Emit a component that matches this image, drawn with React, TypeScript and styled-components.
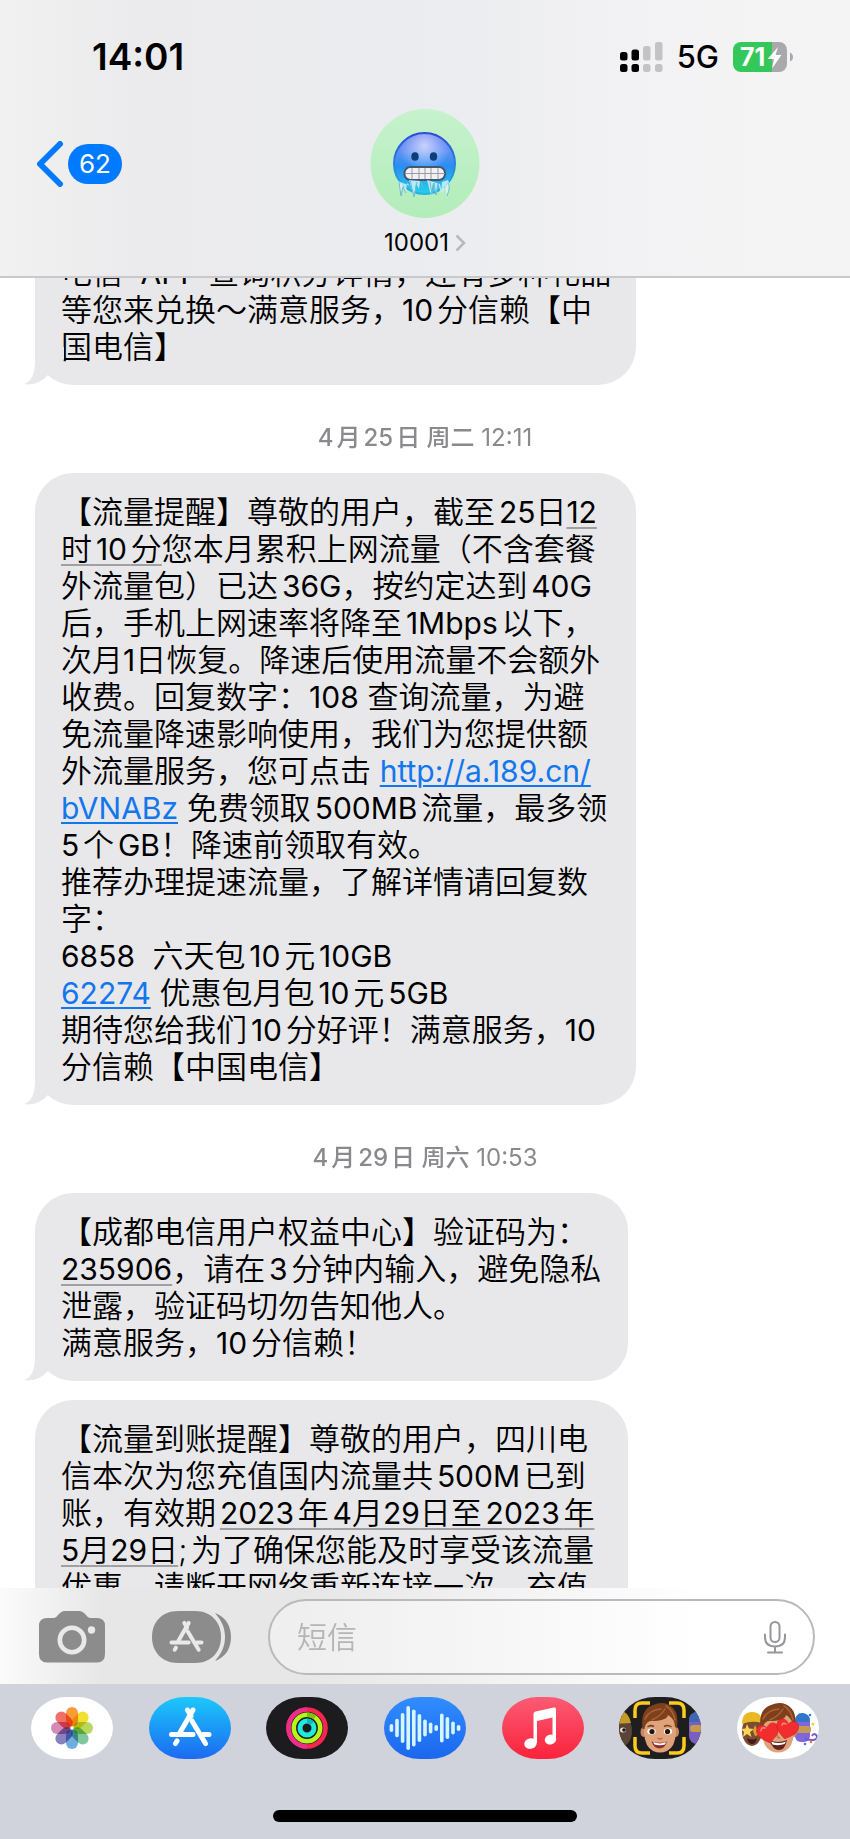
import React from 'react';
import styled, { createGlobalStyle } from 'styled-components';

const GlobalStyle = createGlobalStyle`
  *, *::before, *::after { box-sizing: border-box; }
  html, body { margin: 0; padding: 0; background: #fff; }
  body { font-family: Inter, 'Noto Sans CJK SC', sans-serif; color: #000; }
  button { border: 0; padding: 0; background: none; font: inherit; color: inherit; cursor: pointer; }
  svg { display: block; }
`;

const Screen = styled.div`
  display: flex;
  flex-direction: column;
  height: 100vh;
  overflow: hidden;
  background: #fff;
`;

/* ---------- header ---------- */

const Header = styled.header`
  flex: none;
  position: relative;
  z-index: 1;
  border-bottom: 2px solid #c9c9cb;
  background: linear-gradient(90deg, #f1f1f1 0%, #ebebed 16%, #ebecef 50%, #f2f2f4 74%, #f4f4f4 100%);
`;

const StatusBar = styled.div`
  display: flex;
  align-items: center;
  justify-content: space-between;
  height: 109px;
  padding: 4px 56px 0 92px;
`;

const Clock = styled.time`
  font-size: 37px;
  font-weight: 600;
  line-height: 44px;
`;

const StatusRight = styled.div`
  display: flex;
  align-items: center;
  gap: 14px;
`;

const Network = styled.span`
  font-size: 31px;
  font-weight: 500;
  line-height: 36px;
`;

const NavBar = styled.div`
  display: grid;
  grid-template-columns: 1fr auto 1fr;
  align-items: start;
  padding: 0 36px 17px;
`;

const BackButton = styled.button`
  justify-self: start;
  display: flex;
  align-items: center;
  gap: 4px;
  margin-top: 32px;
`;

const UnreadBadge = styled.span`
  width: 54px;
  border-radius: 20px;
  background: #007aff;
  color: #fff;
  font-size: 26px;
  line-height: 40px;
  text-align: center;
`;

const Contact = styled.button`
  display: flex;
  flex-direction: column;
  align-items: center;
  gap: 9px;
`;

const ContactName = styled.span`
  display: flex;
  align-items: center;
  gap: 6px;
  font-size: 24px;
  line-height: 32px;
`;

/* ---------- conversation ---------- */

const Thread = styled.main`
  flex: 1;
  min-height: 0;
  overflow: hidden;
  padding: 0 35px;
`;

const Scrolled = styled.div`
  display: flex;
  flex-direction: column;
  align-items: flex-start;
  margin-top: -44px;
`;

const Stamp = styled.div`
  align-self: stretch;
  padding: 37px 0 19px;
  color: #8a8a8e;
  font-size: 24px;
  line-height: 32px;
  text-align: center;
  text-autospace: normal;

  b { font-weight: 500; }
`;

const Bubble = styled.article<{ $next?: boolean; $narrow?: boolean }>`
  position: relative;
  width: ${(p) => (p.$narrow ? 76 : 77)}%;
  margin-top: ${(p) => (p.$next ? 19 : 0)}px;
  padding: 20px 26px;
  border-radius: 38px;
  background: #e8e8ea;
  font-size: 31px;
  font-weight: 350;
  line-height: 37px;
  text-autospace: normal;
`;

const TailShape = styled.svg`
  position: absolute;
  left: -11px;
  bottom: 0;
`;

const Line = styled.div`
  height: 37px;
  white-space: pre;
`;

const Latin = styled.span`
  font-size: 30px;
  font-weight: 400;
`;

const Tight = styled.span`
  text-autospace: no-autospace;
`;

const Detected = styled.span`
  text-decoration: underline 2px #a0a0a3;
  text-decoration-skip-ink: none;
  text-underline-offset: 4px;
`;

const Link = styled.a`
  color: #1277ee;
  text-decoration: underline 2px;
  text-underline-offset: 3px;
`;

/* ---------- composer ---------- */

const Composer = styled.form`
  flex: none;
  display: flex;
  align-items: center;
  gap: 36px;
  padding: 11px 35px 9px 39px;
  background: linear-gradient(90deg, #fbfbfb 0%, #e7e7e8 12%, #e7e7e8 36%, #f4f4f5 62%, #fff 82%);
`;

const IconButton = styled.button`
  flex: none;
`;

const AppsButton = styled(IconButton)`
  margin-left: 11px;
`;

const Field = styled.label`
  flex: 1;
  display: flex;
  align-items: center;
  height: 76px;
  padding: 0 27px;
  border: 2px solid #bababc;
  border-radius: 38px;
  background: rgba(255, 255, 255, 0.35);
`;

const Input = styled.input`
  flex: 1;
  min-width: 0;
  border: 0;
  outline: 0;
  padding: 0;
  background: none;
  font: 350 30px/40px Inter, 'Noto Sans CJK SC', sans-serif;

  &::placeholder { color: #b5b5b7; opacity: 1; }
`;

/* ---------- app drawer ---------- */

const Drawer = styled.footer`
  flex: none;
  display: flex;
  flex-direction: column;
  align-items: center;
  padding: 13px 31px 17px;
  background: #d0d3db;
`;

const AppRow = styled.nav`
  align-self: stretch;
  display: flex;
  justify-content: space-between;
`;

const AppButton = styled.button<{ $fill: string }>`
  width: 82px;
  height: 62px;
  border-radius: 36px / 31px;
  overflow: hidden;
  background: ${(p) => p.$fill};
`;

const HomeBar = styled.div`
  width: 304px;
  height: 12px;
  margin-top: 51px;
  border-radius: 6px;
  background: #000;
`;

/* ---------- drawings ---------- */

const Signal = () => (
  <svg width="43" height="30" viewBox="0 0 43 30" aria-hidden="true">
    <g fill="#000">
      <rect x="0" y="10" width="7.5" height="8.5" rx="2.5" />
      <rect x="0" y="22" width="7.5" height="8" rx="2.5" />
      <rect x="11.5" y="7.5" width="7.5" height="11" rx="2.5" />
      <rect x="11.5" y="22" width="7.5" height="8" rx="2.5" />
    </g>
    <g fill="#c3c3c5">
      <rect x="23" y="4" width="7.5" height="14.5" rx="2.5" />
      <rect x="23" y="22" width="7.5" height="8" rx="2.5" />
      <rect x="35" y="0" width="7.5" height="18.5" rx="2.5" />
      <rect x="35" y="22" width="7.5" height="8" rx="2.5" />
    </g>
  </svg>
);

const BatteryBox = styled.span`
  position: relative;
  display: flex;
  align-items: center;
  height: 30px;
`;

const BatteryLevel = styled.span`
  position: absolute;
  left: 7px;
  color: #fff;
  font-size: 25px;
  font-weight: 700;
  line-height: 30px;
`;

const Battery = () => (
  <BatteryBox>
    <svg width="61" height="30" viewBox="0 0 61 30" aria-hidden="true">
      <path d="M8 0H39V30H8A8 8 0 0 1 0 22V8A8 8 0 0 1 8 0Z" fill="#34c759" />
      <path d="M39 0H46A8 8 0 0 1 54 8V22A8 8 0 0 1 46 30H39Z" fill="#a9a9ab" />
      <path d="M57 10.5Q60 12 60 15T57 19.5Z" fill="#a9a9ab" />
      <path d="M45 5L34.500 17H41L39 26.500L48.500 13H42.500Z" fill="#fff" />
    </svg>
    <BatteryLevel>71</BatteryLevel>
  </BatteryBox>
);

const BackChevron = () => (
  <svg width="28" height="46" viewBox="0 0 28 46" aria-hidden="true">
    <path d="M24 3L4 23L24 43" fill="none" stroke="#007aff" strokeWidth="6" strokeLinecap="round" strokeLinejoin="round" />
  </svg>
);

const ColdFace = () => (
  <svg width="110" height="109" viewBox="0 0 110 109" role="img" aria-label="10001">
    <defs>
      <linearGradient id="avatarBg" x1="0" y1="0" x2="0" y2="1">
        <stop offset="0" stopColor="#c6f2cd" />
        <stop offset="1" stopColor="#b2edb9" />
      </linearGradient>
      <linearGradient id="coldSkin" x1="0" y1="0" x2="0" y2="1">
        <stop offset="0" stopColor="#5472ee" />
        <stop offset="0.3" stopColor="#5f90f5" />
        <stop offset="0.55" stopColor="#2a8ef0" />
        <stop offset="1" stopColor="#27d0ea" />
      </linearGradient>
      <radialGradient id="coldShine" cx="0.5" cy="0.2" r="0.45">
        <stop offset="0" stopColor="#e4e4ff" stopOpacity="0.8" />
        <stop offset="1" stopColor="#e4e4ff" stopOpacity="0" />
      </radialGradient>
      <linearGradient id="coldRim" x1="0" y1="0" x2="0" y2="1">
        <stop offset="0" stopColor="#2c4bdb" />
        <stop offset="1" stopColor="#22b6e2" />
      </linearGradient>
    </defs>
    <circle cx="55" cy="54.500" r="54.500" fill="url(#avatarBg)" />
    <circle cx="54.500" cy="54.500" r="30.500" fill="url(#coldSkin)" stroke="url(#coldRim)" strokeWidth="2" />
    <circle cx="54.500" cy="54" r="29" fill="url(#coldShine)" />
    <ellipse cx="45" cy="47.500" rx="3.700" ry="4.300" fill="#0a3f77" />
    <ellipse cx="63.500" cy="47.500" rx="3.700" ry="4.300" fill="#0a3f77" />
    <rect x="34.500" y="58" width="40.500" height="13" rx="6" fill="#f1f1f3" stroke="#43576e" strokeWidth="2" />
    <path d="M35 64.500H75M42 59V70M49 59V70M55 59V70M61 59V70M68 59V70" stroke="#9b9ba1" strokeWidth="1" />
    <path
      d="M28 72L31 87L33 76L36 84L37 74L40 77M39 71L44 88L46 74L49 80L50 72ZM57 71L61 86L63 74L66 87L68 74L71 84L72 73L78 71L80 76L77 88L75 77L72 84L70 75"
      fill="#d8f6fb"
      fillOpacity="0.8"
    />
    <path d="M29 73L31 87L33 78L36 84M40 71L44 88L47 73M51 73L53 78M60 73L62 85L64 74L66 86L68 74M78 74Q81 77 77 87" fill="none" stroke="#6db9d2" strokeWidth="1" />
  </svg>
);

const SmallChevron = () => (
  <svg width="11" height="18" viewBox="0 0 11 18" aria-hidden="true">
    <path d="M1.500 1.500L9 9L1.500 16.500" fill="none" stroke="#b9b9bc" strokeWidth="2.500" />
  </svg>
);

const Tail = () => (
  <TailShape width="40" height="38" viewBox="0 0 40 38" aria-hidden="true">
    <path d="M11 0V14C11 27 7 35 0 37Q14 39.500 25 27L40 12V0Z" fill="#e8e8ea" />
  </TailShape>
);

const Camera = () => (
  <svg width="66" height="52" viewBox="0 0 66 52" aria-hidden="true">
    <path
      d="M8 7H15Q17 7 19 4L21 2Q23 0 26 0H40Q43 0 45 2L47 4Q49 7 51 7H58Q66 7 66 15V43Q66 51.500 58 51.500H8Q0 51.500 0 43V15Q0 7 8 7Z"
      fill="#8c8c8d"
    />
    <circle cx="33" cy="29" r="12.200" fill="none" stroke="#e9e9ea" strokeWidth="4.600" />
    <circle cx="52.500" cy="19" r="3.700" fill="#e9e9ea" />
  </svg>
);

const StoreMark = ({ color }: { color: string }) => (
  <g fill="none" stroke={color} strokeWidth="5" strokeLinecap="round">
    <path d="M44 13L31 35.500" />
    <path d="M38.500 13L42 19M43 24L56.500 46.500" />
    <path d="M22.500 37.500H44M54 37.500H60" />
    <path d="M28 44L26.500 46.500" />
  </g>
);

const Apps = () => (
  <svg width="80" height="52" viewBox="0 0 80 52" aria-hidden="true">
    <path d="M63 2C74 6 79 15 79 26S74 46 63 50C69 43 73 36 73 26S69 9 63 2Z" fill="#8c8c8d" />
    <path d="M26 0H43C59 0 69 11 69 26S59 52 43 52H26C10 52 0 41 0 26S10 0 26 0Z" fill="#8c8c8d" />
    <g transform="translate(1.500 1.500) scale(0.800)">
      <StoreMark color="#e9e9ea" />
    </g>
  </svg>
);

const Mic = () => (
  <svg width="22" height="33" viewBox="0 0 22 33" fill="none" stroke="#97979a" strokeWidth="2" strokeLinecap="round" aria-hidden="true">
    <rect x="6.500" y="1" width="9" height="20" rx="4.500" />
    <path d="M1 13.500V16Q1 25.500 11 25.500T21 16V13.500M11 25.500V31.500M4 31.500H18" />
  </svg>
);

const AppSvg = ({ children }: { children: React.ReactNode }) => (
  <svg width="82" height="62" viewBox="0 0 82 62" aria-hidden="true">{children}</svg>
);

const petals = ['#f79427', '#f0dc20', '#b3d553', '#74c095', '#63a6de', '#7f75b8', '#d07fb0', '#f0635a'];
const PetalShape = styled.rect`
  mix-blend-mode: multiply;
`;

const Photos = () => (
  <AppSvg>
    {petals.map((c, i) => (
      <PetalShape key={c} x="35" y="10" width="12" height="19.500" rx="6" fill={c} fillOpacity="0.920" transform={`rotate(${i * 45} 41 31)`} />
    ))}
  </AppSvg>
);

const Activity = () => (
  <AppSvg>
    <g fill="none" strokeWidth="4.600">
      <circle cx="41" cy="31" r="18.500" stroke="#fa2450" />
      <path d="M41 12.500A18.500 18.500 0 0 0 41 49.500" stroke="#ee2c8c" />
      <circle cx="41" cy="31" r="13.200" stroke="#b6f41c" />
      <path d="M41 17.800A13.200 13.200 0 0 1 49 20.500" stroke="#7cc40b" />
      <circle cx="41" cy="31" r="7" stroke="#1feadb" strokeWidth="5" />
      <path d="M41 24A7 7 0 0 1 46 26.500" stroke="#11b8c0" strokeWidth="5" />
    </g>
  </AppSvg>
);

const waveHeights = [8, 18.5, 30, 44, 37, 28, 17, 11, 6, 29, 22, 13, 6];
const Wave = () => (
  <AppSvg>
    {waveHeights.map((h, i) => (
      <rect key={i} x={5.6 + i * 5.6} y={31 - h / 2} width="3.600" height={h} rx="1.800" fill="#d5f6ff" />
    ))}
  </AppSvg>
);

const Music = () => (
  <AppSvg>
    <path d="M31.500 17Q31.500 15 33.500 14.500L52 10.600Q54 10.200 54 12.500V42H50.500V20.500L35 24V46H31.500Z" fill="#fff" />
    <ellipse cx="28.500" cy="46.500" rx="6.300" ry="5.200" fill="#fff" transform="rotate(-15 28.500 46.500)" />
    <ellipse cx="48.500" cy="42.500" rx="5.800" ry="5" fill="#fff" transform="rotate(-15 48.500 42.500)" />
  </AppSvg>
);

const Head = () => (
  <g>
    <ellipse cx="24.500" cy="35" rx="3" ry="5" fill="#c98863" />
    <ellipse cx="57" cy="35" rx="3" ry="5" fill="#c98863" />
    <path d="M25 24Q25 13 41 13T57 24V36Q56 50 48 54Q41 57 34 54Q26 50 25 36Z" fill="#e0a27a" />
    <path d="M23.500 32Q21 12 34 8Q46 3 54 11Q60 17 58 31L56 30Q56 22 49 18Q48 24 31 24Q26 26 25.500 32Z" fill="#7d3f1c" />
    <path d="M26 22Q30 13 42 12M33 23Q42 19 46 12M47 9Q54 13 56 23" fill="none" stroke="#a86434" strokeWidth="1.500" strokeLinecap="round" />
  </g>
);

const MemojiCamera = () => (
  <AppSvg>
    <ellipse cx="2" cy="34" rx="11" ry="16" fill="#5b4336" />
    <path d="M-2 13Q9 13 12 26L-2 27Z" fill="#c59c23" />
    <ellipse cx="4" cy="33" rx="3" ry="2.500" fill="#e8e3de" />
    <circle cx="5" cy="33" r="1.800" fill="#1d120c" />
    <rect x="70" y="15" width="18" height="32" rx="8" fill="#7a5fc0" />
    <path d="M70 22Q74 13 84 14V25H70Z" fill="#3f66b5" />
    <rect x="71" y="28" width="14" height="7" rx="3" fill="#c59a4d" />
    <Head />
    <path d="M28.500 30Q31.500 27.500 35 29.500M45 29.500Q49 27.500 52.500 30" fill="none" stroke="#744021" strokeWidth="1.500" />
    <ellipse cx="32.500" cy="34.500" rx="4.200" ry="3" fill="#fff" />
    <ellipse cx="49" cy="34.500" rx="4.200" ry="3" fill="#fff" />
    <circle cx="33" cy="34.500" r="2.600" fill="#24150d" />
    <circle cx="48.500" cy="34.500" r="2.600" fill="#24150d" />
    <path d="M38.500 41Q41 43 43.500 41" fill="none" stroke="#b56f4b" strokeWidth="1.500" />
    <path d="M32.500 44.500Q41 47 48 44.500Q46 51.500 40.500 51.500T32.500 44.500Z" fill="#8f2f2c" />
    <path d="M34 45.300Q41 47.500 47 45.300L46 47.500Q41 49 35.500 47.500Z" fill="#fff" />
    <path
      d="M16 21V13Q16 6 23 6H31M50 6H58Q65 6 65 13V21M65 40V49Q65 56 58 56H50M31 56H23Q16 56 16 49V40"
      fill="none"
      stroke="#fccb1c"
      strokeWidth="3.500"
    />
  </AppSvg>
);

const heart = 'M0 10C-6 6-11 2-11-3C-11-10-3-11 0-5C3-11 11-10 11-3C11 2 6 6 0 10Z';

const MemojiStickers = () => (
  <AppSvg>
    <ellipse cx="15" cy="34" rx="10" ry="15" fill="#7a4c33" />
    <path d="M5 27Q5 15 15 15T25 26Q15 23 5 27Z" fill="#e8b922" />
    <path d="M10 27L12 31.500L17 32L13 35L14.500 40L10 37L6 40L7 35L4 32L8.500 31.500Z" fill="#f9d65b" />
    <path d="M18 28L20 32H24V37L18 39L16 34Z" fill="#dca526" />
    <path d="M10 41Q15 44 20 41Q19 47 15 47T10 41Z" fill="#431a17" />
    <rect x="58" y="17" width="15" height="28" rx="6" fill="#8365da" />
    <path d="M58 25Q59 15 66 16T73 25Z" fill="#2e77cb" />
    <rect x="59" y="29" width="15" height="7" rx="3" fill="#c49a56" />
    <path d="M68 42Q81 45 80 39Q77 35 75 39" fill="none" stroke="#7f58c7" strokeWidth="2" />
    <circle cx="73" cy="18" r="1.300" fill="#287eea" />
    <circle cx="76" cy="27" r="1.500" fill="#f4ce35" />
    <circle cx="74" cy="45" r="1.300" fill="#ef7934" />
    <circle cx="68" cy="47" r="1.300" fill="#3a83f3" />
    <Head />
    <path d="M32 43Q41 47 50 43Q48 53 42 53T32 43Z" fill="#642222" />
    <path d="M34 44.500Q42 47.500 49 44.500L47.500 47Q42 49 35.500 47.500Z" fill="#fff" />
    <path d="M40 34Q39 41 43 41" fill="none" stroke="#b8714c" strokeWidth="1.500" />
    <g fill="#f32d2d" stroke="#c91c20" strokeWidth="0.500">
      <path d={heart} transform="translate(31 36) rotate(-12)" />
      <path d={heart} transform="translate(50 32) rotate(14)" />
    </g>
    <path d="M24 34Q24 30 28 31M45 28Q46 25 49 27" fill="none" stroke="#ff8a82" strokeWidth="1.500" strokeLinecap="round" />
  </AppSvg>
);

const AppStore = () => (
  <AppSvg>
    <StoreMark color="#fff" />
  </AppSvg>
);

/* ---------- content ---------- */

/** Sets Latin runs a little smaller than the Han text, and 月 / 日 close to their figures. */
const Text = ({ children }: { children: string }) => (
  <>
    {children.split(/([A-Za-z0-9]+|[月日])/).map((run, i) => {
      if (i % 2 === 0) return run;
      return run === '月' || run === '日' ? <Tight key={i}>{run}</Tight> : <Latin key={i}>{run}</Latin>;
    })}
  </>
);

type Part = string | { detected: string } | { href: string; label: string };

const renderPart = (part: Part, key: number) => {
  if (typeof part === 'string') return <Text key={key}>{part}</Text>;
  if ('detected' in part) return <Detected key={key}><Text>{part.detected}</Text></Detected>;
  return <Link key={key} href={part.href}><Latin>{part.label}</Latin></Link>;
};

interface MessageProps {
  lines: Part[][];
  tail?: boolean;
  next?: boolean;
  narrow?: boolean;
}

const Message = ({ lines, tail, next, narrow }: MessageProps) => (
  <Bubble $next={next} $narrow={narrow}>
    {tail && <Tail />}
    {lines.map((line, i) => (
      <Line key={i}>{line.map(renderPart)}</Line>
    ))}
  </Bubble>
);

const points: Part[][] = [
  ['电信  APP 查询积分详情，还有多种礼品'],
  ['等您来兑换～满意服务，10分信赖【中'],
  ['国电信】'],
];

const dataUsage: Part[][] = [
  ['【流量提醒】尊敬的用户，截至25日', { detected: '12' }],
  [{ detected: '时10分' }, '您本月累积上网流量（不含套餐'],
  ['外流量包）已达36G，按约定达到40G'],
  ['后，手机上网速率将降至1Mbps以下，'],
  ['次月1日恢复。降速后使用流量不会额外'],
  ['收费。回复数字：108 查询流量，为避'],
  ['免流量降速影响使用，我们为您提供额'],
  ['外流量服务，您可点击 ', { href: 'http://a.189.cn/bVNABz', label: 'http://a.189.cn/' }],
  [{ href: 'http://a.189.cn/bVNABz', label: 'bVNABz' }, ' 免费领取500MB流量，最多领'],
  ['5个GB！降速前领取有效。'],
  ['推荐办理提速流量，了解详情请回复数'],
  ['字：'],
  ['6858  六天包10元10GB'],
  [{ href: 'sms:62274', label: '62274' }, ' 优惠包月包10元5GB'],
  ['期待您给我们10分好评！满意服务，10'],
  ['分信赖【中国电信】'],
];

const code: Part[][] = [
  ['【成都电信用户权益中心】验证码为：'],
  [{ detected: '235906' }, '，请在3分钟内输入，避免隐私'],
  ['泄露，验证码切勿告知他人。'],
  ['满意服务，10分信赖！'],
];

const topUp: Part[][] = [
  ['【流量到账提醒】尊敬的用户，四川电'],
  ['信本次为您充值国内流量共500M已到'],
  ['账，有效期', { detected: '2023年4月29日至2023年' }],
  [{ detected: '5月29日' }, ';为了确保您能及时享受该流量'],
  ['优惠，请断开网络重新连接一次，充值'],
];

const apps = [
  { label: 'Photos', fill: '#fff', icon: <Photos /> },
  { label: 'App Store', fill: 'linear-gradient(#1bc8fc, #1d69f1)', icon: <AppStore /> },
  { label: 'Activity', fill: '#1c1c1e', icon: <Activity /> },
  { label: 'Audio', fill: 'linear-gradient(#318dff, #1b66ee)', icon: <Wave /> },
  { label: 'Music', fill: 'linear-gradient(#fb5b74, #fa233b)', icon: <Music /> },
  { label: 'Memoji', fill: '#1e1e1e', icon: <MemojiCamera /> },
  { label: 'Memoji stickers', fill: '#fff', icon: <MemojiStickers /> },
];

export default function App() {
  return (
    <>
      <GlobalStyle />
      <Screen lang="zh-CN">
        <Header>
          <StatusBar>
            <Clock>14:01</Clock>
            <StatusRight>
              <Signal />
              <Network>5G</Network>
              <Battery />
            </StatusRight>
          </StatusBar>
          <NavBar>
            <BackButton type="button">
              <BackChevron />
              <UnreadBadge>62</UnreadBadge>
            </BackButton>
            <Contact type="button">
              <ColdFace />
              <ContactName>
                10001
                <SmallChevron />
              </ContactName>
            </Contact>
          </NavBar>
        </Header>
        <Thread>
          <Scrolled>
            <Message lines={points} tail />
            <Stamp><b>4月25日 周二</b> 12:11</Stamp>
            <Message lines={dataUsage} tail />
            <Stamp><b>4月29日 周六</b> 10:53</Stamp>
            <Message lines={code} tail narrow />
            <Message lines={topUp} next narrow />
          </Scrolled>
        </Thread>
        <Composer onSubmit={(e) => e.preventDefault()}>
          <IconButton type="button" aria-label="Camera"><Camera /></IconButton>
          <AppsButton type="button" aria-label="Apps"><Apps /></AppsButton>
          <Field>
            <Input type="text" placeholder="短信" aria-label="短信" />
            <IconButton type="button" aria-label="Dictate"><Mic /></IconButton>
          </Field>
        </Composer>
        <Drawer>
          <AppRow>
            {apps.map((app) => (
              <AppButton key={app.label} type="button" aria-label={app.label} $fill={app.fill}>
                {app.icon}
              </AppButton>
            ))}
          </AppRow>
          <HomeBar />
        </Drawer>
      </Screen>
    </>
  );
}
